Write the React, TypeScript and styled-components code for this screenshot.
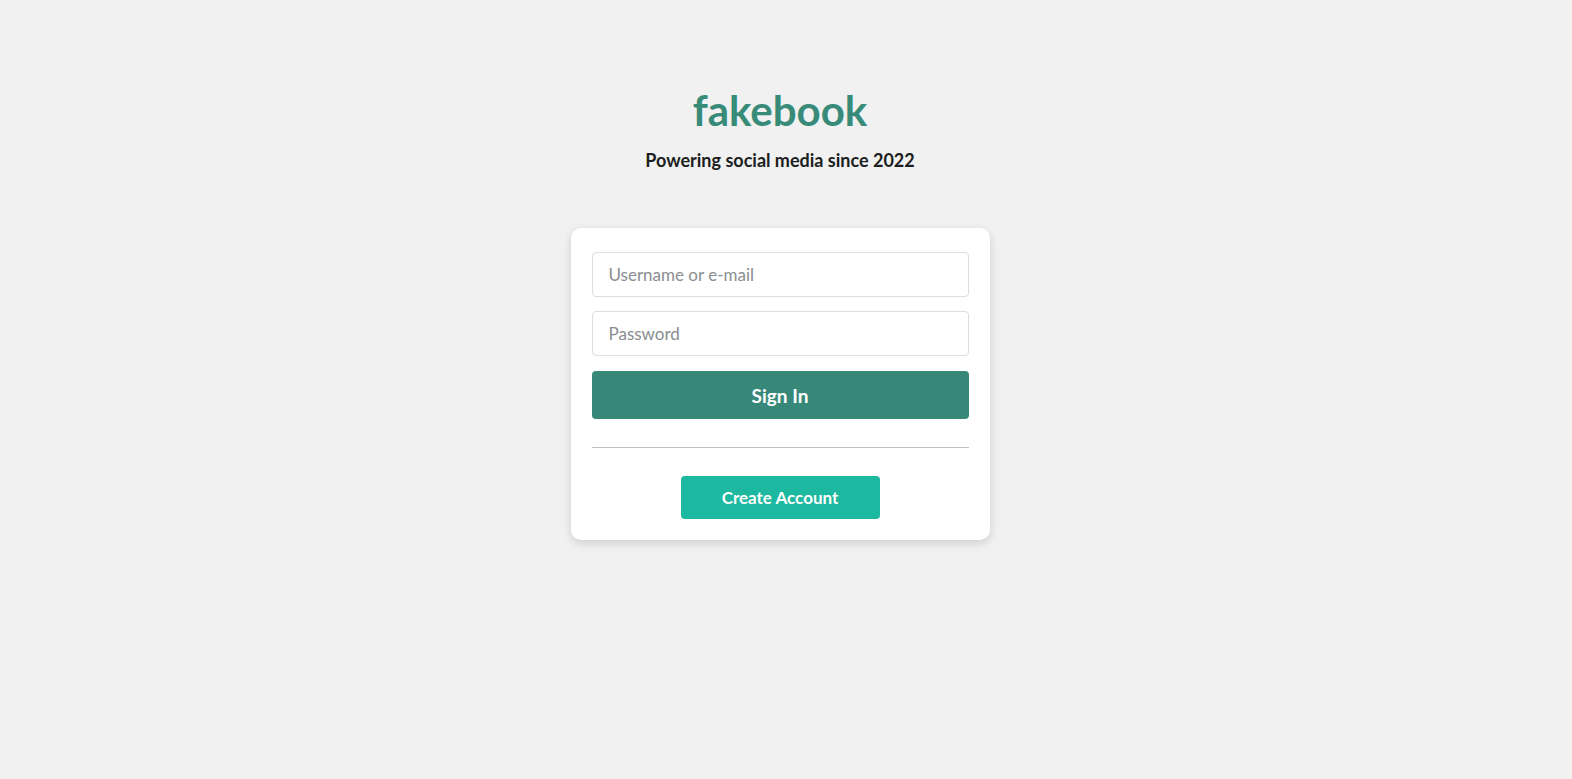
import styled, { createGlobalStyle } from 'styled-components';

const GlobalStyle = createGlobalStyle`
  * { box-sizing: border-box; }
  body {
    margin: 0;
    background: #f0f1f0;
    font-family: Lato, "Liberation Sans", sans-serif;
  }
`;

const Page = styled.main`
  min-height: 779px;
  display: flex;
  flex-direction: column;
  align-items: center;
  padding: 84px 12px 0 0;
`;

const Title = styled.h1`
  margin: 0;
  font-size: 42px;
  font-weight: 700;
  line-height: 52px;
  color: #378b78;
`;

const Tagline = styled.p`
  margin: 12px 0 0;
  font-size: 18px;
  font-weight: 700;
  line-height: 24px;
  color: #1c1e21;
`;

const Card = styled.form`
  margin-top: 56px;
  width: 419px;
  background: #fff;
  border-radius: 10px;
  box-shadow: 0 3px 10px rgba(0, 0, 0, 0.15);
  padding: 24px 21px 21px;
  display: flex;
  flex-direction: column;
`;

const Input = styled.input`
  height: 45px;
  width: 100%;
  border: 1px solid #dadde1;
  border-radius: 4px;
  padding: 0 16px;
  font-family: inherit;
  font-size: 17px;
  color: #1c1e21;
  margin-bottom: 14px;
  &::placeholder { color: #8a8d91; }
  &:focus { outline: none; border-color: #378b78; }
`;

const Button = styled.button<{ $variant: 'primary' | 'secondary' }>`
  border: none;
  border-radius: 4px;
  color: #fff;
  font-family: inherit;
  font-weight: 700;
  cursor: pointer;
  background: ${(p) => (p.$variant === 'primary' ? '#38887a' : '#1cb89f')};
  height: ${(p) => (p.$variant === 'primary' ? '48px' : '43px')};
  font-size: ${(p) => (p.$variant === 'primary' ? '19px' : '17px')};
  width: ${(p) => (p.$variant === 'primary' ? '100%' : '199px')};
  align-self: center;
  margin-top: ${(p) => (p.$variant === 'primary' ? '1px' : '0')};
`;

const Divider = styled.hr`
  width: 100%;
  border: none;
  border-top: 1px solid #bfc1c3;
  margin: 28px 0 28px;
`;

const App = () => (
  <>
    <GlobalStyle />
    <Page>
      <Title>fakebook</Title>
      <Tagline>Powering social media since 2022</Tagline>
      <Card onSubmit={(e) => e.preventDefault()}>
        <Input placeholder="Username or e-mail" />
        <Input type="password" placeholder="Password" />
        <Button $variant="primary">Sign In</Button>
        <Divider />
        <Button $variant="secondary" type="button">
          Create Account
        </Button>
      </Card>
    </Page>
  </>
);

export default App;
